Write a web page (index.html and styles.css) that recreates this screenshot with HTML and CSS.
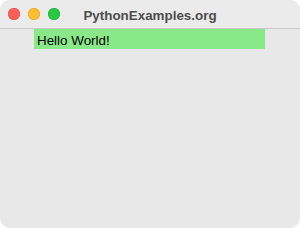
FILE: index.html
```html
<!DOCTYPE html>
<html lang="en">
<head>
    <meta charset="UTF-8">
    <meta name="viewport" content="width=device-width, initial-scale=1.0">
    <title>PythonExamples.org</title>
    <link rel="stylesheet" href="styles.css">
</head>
<body>
    <div class="window">
        <div class="titlebar">
            <div class="lights">
                <span class="light close"></span>
                <span class="light minimize"></span>
                <span class="light zoom"></span>
            </div>
            <div class="title">PythonExamples.org</div>
        </div>
        <div class="content">
            <div class="label">Hello World!</div>
        </div>
    </div>
</body>
</html>
```

FILE: styles.css
```css
body {
    margin: 0;
    background-color: #ffffff;
    font-family: "Liberation Sans", Arial, sans-serif;
}
.window {
    width: 300px;
    height: 228px;
    background-color: #e8e8e8;
    border-radius: 10px;
    overflow: hidden;
}
.titlebar {
    position: relative;
    height: 26px;
    padding-top: 2px;
    background-color: #ebebeb;
    border-bottom: 1px solid #c9c9c9;
    display: flex;
    align-items: center;
    justify-content: center;
}
.lights {
    position: absolute;
    left: 8px;
    top: 8px;
    display: flex;
    gap: 8px;
}
.light {
    width: 12px;
    height: 12px;
    border-radius: 50%;
}
.light.close {
    background-color: #fe5f57;
    box-shadow: inset 0 0 0 0.5px #e2463f;
}
.light.minimize {
    background-color: #febc2e;
    box-shadow: inset 0 0 0 0.5px #e1a116;
}
.light.zoom {
    background-color: #28c840;
    box-shadow: inset 0 0 0 0.5px #12ac28;
}
.title {
    font-size: 13.4px;
    font-weight: bold;
    color: #4d4d4d;
}
.content {
    padding-left: 34px;
}
.label {
    width: 228px;
    height: 16px;
    padding: 4px 0 0 3px;
    background-color: #89e989;
    color: #000000;
    font-size: 13.4px;
    line-height: 16px;
}
```
